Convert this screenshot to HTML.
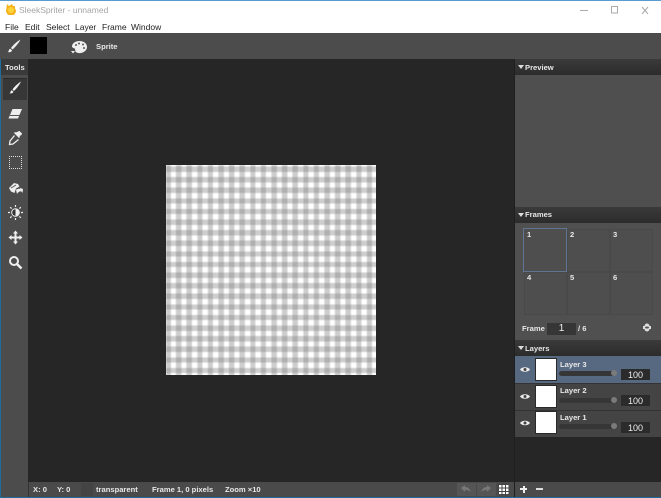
<!DOCTYPE html>
<html><head><meta charset="utf-8">
<style>
html,body{margin:0;padding:0;width:661px;height:498px;overflow:hidden;background:#262626;font-family:"Liberation Sans",sans-serif}
.a{position:absolute}
.t{position:absolute;white-space:nowrap;font-size:7.600px;font-weight:bold;color:#e8e8e8;line-height:14px}
.m{position:absolute;white-space:nowrap;font-size:8.500px;color:#222;line-height:12px;top:21px}
.h{position:absolute;left:515px;width:146px;height:16px;background:linear-gradient(#3a3a3a,#2c2c2c)}
.tri{position:absolute;left:3px;top:6px;width:0;height:0;border:3px solid transparent;border-top:4px solid #ddd}
.cell{position:absolute;width:43px;height:43px;border:1px solid #494949;background:#4e4e4e;box-sizing:border-box}
.thumb{position:absolute;left:535px;width:20px;height:21px;background:#fff;border:1px solid #2a2a2a;box-sizing:content-box}
.slider{position:absolute;left:559px;width:56px;height:5px;border-radius:3px;background:#363636}
.knob{position:absolute;left:611px;width:6px;height:6px;border-radius:3px;background:#7a7a7a}
.num{position:absolute;left:621px;width:29px;height:11px;background:#2b2b2b;color:#eee;font-size:9px;line-height:12px;text-align:center}
</style></head><body>
<div class="a" style="left:0;top:0;width:661px;height:33px;background:#fff"></div>
<div class="a" style="left:0;top:0;width:661px;height:1px;background:#5a9bd0"></div>
<svg class="a" style="left:5px;top:3px" width="12" height="12" viewBox="0 0 12 12"><path d="M2 1l2 2 3-2 1 2 2 0 0 2 1 3a5 4.500 0 0 1-10 0z" fill="#f5b21f"/><circle cx="6" cy="7" r="3" fill="#fdd33a"/></svg>
<div class="a" style="left:19px;top:4px;font-size:8.500px;line-height:12px;color:#a5a5a5;white-space:nowrap">SleekSpriter - unnamed</div>
<div class="m" style="left:5px">File</div>
<div class="m" style="left:25px">Edit</div>
<div class="m" style="left:46px">Select</div>
<div class="m" style="left:75px">Layer</div>
<div class="m" style="left:102px">Frame</div>
<div class="m" style="left:131px">Window</div>
<svg class="a" style="left:570px;top:4px" width="90" height="14" viewBox="0 0 90 14" fill="none" stroke="#aaa"><path d="M10 6.500h8"/><rect x="41.500" y="2.500" width="6" height="6.500"/><path d="M72 3l6 7M78 3l-6 7"/></svg>

<!-- toolbar -->
<div class="a" style="left:0;top:33px;width:661px;height:26px;background:#4c4c4c"></div>
<svg class="a" style="left:6px;top:38px" width="16" height="16" viewBox="0 0 16 16"><path d="M14.500 1.500C11 3.500 7 7 5 10l1.500 1.500C9.500 9 12.800 5 14.500 1.500zM4.200 10.800c-1.500.5-1.300 2-1.700 2.600-.3.400-1 .6-1 .6 2 .6 4.300 0 4.500-1.800z" fill="#eee"/></svg>
<div class="a" style="left:30px;top:37px;width:17px;height:17px;background:#000"></div>
<svg class="a" style="left:70px;top:40px" width="18" height="15" viewBox="0 0 18 15"><path d="M9.500 1C5 1 2 3.500 2 6.500c0 1.500 2.500 1.500 3 2.500.5 1.500-.5 3 3 4 5 .8 9-2.500 9-6S14 1 9.500 1z" fill="#eee"/><circle cx="6" cy="5" r="1" fill="#555"/><circle cx="9" cy="3.500" r="1" fill="#555"/><circle cx="13" cy="4.500" r="1" fill="#555"/><circle cx="14" cy="8" r="1" fill="#555"/><path d="M1 11h4l-2 2.500z" fill="#eee"/></svg>
<div class="t" style="left:96px;top:40px">Sprite</div>

<!-- tools -->
<div class="a" style="left:0;top:59px;width:28px;height:423px;background:#4c4c4c"></div>
<div class="a" style="left:0;top:59px;width:1px;height:439px;background:#1d6d9c"></div>
<div class="a" style="left:1px;top:59px;width:27px;height:16px;background:#3a3a3a"></div>
<div class="t" style="left:5px;top:61px">Tools</div>
<div class="a" style="left:3px;top:78px;width:24px;height:22px;background:#373737;border-top:1px solid #2a2a2a;box-sizing:border-box"></div>
<svg class="a" style="left:7px;top:80px" width="16" height="16" viewBox="0 0 16 16"><path d="M14 1.500C11 3.500 7.500 6.500 5.500 9.500l1.500 1.500C9.500 8.500 12.500 5 14 1.500zM4.800 10.300c-1.300.5-1.200 1.800-1.500 2.300-.3.400-1 .6-1 .6 2 .5 4-.1 4.100-1.600z" fill="#f2f2f2"/></svg>
<svg class="a" style="left:7px;top:107px" width="16" height="14" viewBox="0 0 16 14"><path d="M5.500 2L15 2 11 11.500 1.500 11.500z" fill="#eee"/><path d="M3 8.500h9.500" stroke="#555" stroke-width="1"/></svg>
<svg class="a" style="left:8px;top:130px" width="15" height="16" viewBox="0 0 15 16"><path d="M10 1.500l1.500-.5 2.500 2.500-.5 1.500-2 1 .5 1-1 1-5-5 1-1 1 .5z" fill="#eee"/><path d="M6.500 5.500L2 11l-.5 3.500L5 14l5.500-4.500" fill="none" stroke="#eee" stroke-width="1.300"/></svg>
<div class="a" style="left:9px;top:156px;width:11px;height:11px;border:1px dotted #ddd"></div>
<svg class="a" style="left:8px;top:181px" width="16" height="15" viewBox="0 0 16 15"><path d="M1 7L6 2l4 1 1.500 2.500L8 7.500 6.500 12 3 10.500z" fill="#eee"/><path d="M3 7l5-3" stroke="#555"/><path d="M8 9c1.500-1.500 3.500-1.500 4.500-.5L11.500 6.800 15 8 14.500 12 13.500 10.500C12 10 10 11 9 13z" fill="#eee"/></svg>
<svg class="a" style="left:8px;top:205px" width="15" height="15" viewBox="0 0 15 15"><circle cx="7.500" cy="7.500" r="3.800" fill="#333" stroke="#eee"/><path d="M7.500 4a3.500 3.500 0 0 1 0 7z" fill="#eee"/><path d="M7.500 0v2M7.500 13v2M0 7.500h2M13 7.500h2M2.200 2.200l1.400 1.400M11.400 11.400l1.400 1.400M2.200 12.800l1.400-1.400M11.400 3.600l1.400-1.400" stroke="#eee" stroke-width="1.200"/></svg>
<svg class="a" style="left:8px;top:230px" width="15" height="15" viewBox="0 0 15 15"><path d="M7.500 0.500L10 3.500H8.500v3h3V5l3 2.500-3 2.500V8.500h-3v3H10l-2.500 3-2.500-3h1.500v-3h-3V10L.5 7.500 3.500 5v1.500h3v-3H5z" fill="#eee"/></svg>
<svg class="a" style="left:8px;top:255px" width="15" height="15" viewBox="0 0 15 15"><circle cx="6" cy="6" r="4" fill="none" stroke="#eee" stroke-width="2"/><path d="M9 9l4.500 4.500" stroke="#eee" stroke-width="2.500"/></svg>

<!-- canvas -->
<div class="a" style="left:28px;top:59px;width:487px;height:423px;background:#262626"></div>
<div class="a" style="left:166px;top:165px;width:210px;height:210px;overflow:hidden;background:#fff"><div style="width:212px;height:212px;filter:blur(.5px);background-color:#fff;background-image:repeating-linear-gradient(90deg,rgba(120,120,120,.36) 0 5.300px,rgba(120,120,120,0) 5.300px 10.600px),repeating-linear-gradient(180deg,rgba(120,120,120,.36) 0 5.300px,rgba(120,120,120,0) 5.300px 10.600px);background-position:-.6px 1.500px"></div></div>

<!-- status -->
<div class="a" style="left:1px;top:482px;width:514px;height:15px;background:#4a4a4a"></div>
<div class="a" style="left:1px;top:482px;width:27px;height:15px;background:#4c4c4c"></div>
<div class="a" style="left:28px;top:482px;width:1px;height:15px;background:#333"></div>
<div class="t" style="left:33px;top:483px">X: 0</div>
<div class="t" style="left:57px;top:483px">Y: 0</div>
<div class="a" style="left:81px;top:483px;width:12px;height:13px;background:#444"></div>
<div class="t" style="left:96px;top:483px">transparent</div>
<div class="t" style="left:152px;top:483px">Frame 1, 0 pixels</div>
<div class="t" style="left:225px;top:483px">Zoom ×10</div>
<div class="a" style="left:457px;top:483px;width:19px;height:13px;background:#555"></div>
<div class="a" style="left:477px;top:483px;width:19px;height:13px;background:#555"></div>
<svg class="a" style="left:460px;top:484px" width="34" height="10" viewBox="0 0 34 10" fill="#777"><path d="M1 4l4-3v2c3 0 5 2 6 5-1.500-1.500-3-2-6-2v2zM31 4l-4-3v2c-3 0-5 2-6 5 1.500-1.500 3-2 6-2v2z"/></svg>
<div class="a" style="left:498px;top:484px;width:11px;height:10px;background-color:#fff;background-image:linear-gradient(90deg,#444 1px,transparent 1px),linear-gradient(#444 1px,transparent 1px);background-size:3.500px 3.500px"></div>
<div class="a" style="left:0;top:497px;width:661px;height:1px;background:#1d6d9c"></div>

<!-- right panel -->
<div class="a" style="left:514px;top:59px;width:1px;height:438px;background:#1f1f1f"></div>
<div class="h" style="top:59px"><div class="tri"></div><div class="t" style="left:10px;top:2px">Preview</div></div>
<div class="a" style="left:515px;top:75px;width:146px;height:132px;background:#4f4f4f"></div>
<div class="h" style="top:207px"><div class="tri"></div><div class="t" style="left:10px;top:1px">Frames</div></div>
<div class="a" style="left:515px;top:223px;width:146px;height:117px;background:#505050"></div>
<div class="cell" style="left:567px;top:229px"></div>
<div class="cell" style="left:610px;top:229px"></div>
<div class="cell" style="left:524px;top:272px"></div>
<div class="cell" style="left:567px;top:272px"></div>
<div class="cell" style="left:610px;top:272px"></div>
<div class="cell" style="left:523px;top:228px;width:44px;height:44px;border-color:#5f7591"></div>
<div class="t" style="left:527px;top:228px">1</div><div class="t" style="left:570px;top:228px">2</div><div class="t" style="left:613px;top:228px">3</div>
<div class="t" style="left:527px;top:271px">4</div><div class="t" style="left:570px;top:271px">5</div><div class="t" style="left:613px;top:271px">6</div>
<div class="t" style="left:522px;top:322px">Frame</div>
<div class="a" style="left:547px;top:323px;width:29px;height:12px;background:#363636;color:#eee;font-size:10px;line-height:12px;text-align:center">1</div>
<div class="t" style="left:578px;top:322px">/ 6</div>
<svg class="a" style="left:642px;top:322px" width="10" height="11" viewBox="0 0 10 11"><path d="M2.500 4a2.500 2.500 0 0 1 5 0h1.500v3H7.500a2.500 2.500 0 0 1-5 0H1V4z" fill="#ddd"/><ellipse cx="5" cy="5.500" rx="2" ry="1" fill="#555"/></svg>
<div class="h" style="top:340px"><div class="tri"></div><div class="t" style="left:10px;top:2px">Layers</div></div>
<div class="a" style="left:515px;top:356px;width:146px;height:27px;background:#566980"></div>
<div class="a" style="left:515px;top:383px;width:146px;height:26px;background:#444;border-top:1px solid #333"></div>
<div class="a" style="left:515px;top:410px;width:146px;height:26px;background:#444;border-top:1px solid #333"></div>
<div class="a" style="left:515px;top:437px;width:146px;height:45px;background:#262626"></div>
<svg class="a" style="left:520px;top:365px" width="10" height="64" viewBox="0 0 10 64" fill="#eee"><path d="M0 4.500C2 1.500 8 1.500 10 4.500 8 7.500 2 7.500 0 4.500z"/><path d="M0 31.500C2 28.500 8 28.500 10 31.500 8 34.500 2 34.500 0 31.500zM0 58C2 55 8 55 10 58 8 61 2 61 0 58z"/><circle cx="5" cy="4.500" r="1.500" fill="#444"/><circle cx="5" cy="31.500" r="1.500" fill="#444"/><circle cx="5" cy="58" r="1.500" fill="#444"/></svg>
<div class="thumb" style="top:358px"></div><div class="thumb" style="top:385px"></div><div class="thumb" style="top:411px"></div>
<div class="t" style="left:560px;top:358px">Layer 3</div>
<div class="t" style="left:560px;top:384px">Layer 2</div>
<div class="t" style="left:560px;top:411px">Layer 1</div>
<div class="slider" style="top:371px"></div><div class="slider" style="top:398px"></div><div class="slider" style="top:424px"></div>
<div class="knob" style="top:370px"></div><div class="knob" style="top:397px"></div><div class="knob" style="top:423px"></div>
<div class="num" style="top:369px">100</div><div class="num" style="top:395px">100</div><div class="num" style="top:422px">100</div>
<div class="a" style="left:515px;top:482px;width:146px;height:15px;background:#4a4a4a"></div>
<div class="a" style="left:520px;top:488px;width:7px;height:2px;background:#eee"></div>
<div class="a" style="left:522.500px;top:485.500px;width:2px;height:7px;background:#eee"></div>
<div class="a" style="left:536px;top:488px;width:7px;height:2px;background:#ddd"></div>
</body></html>
